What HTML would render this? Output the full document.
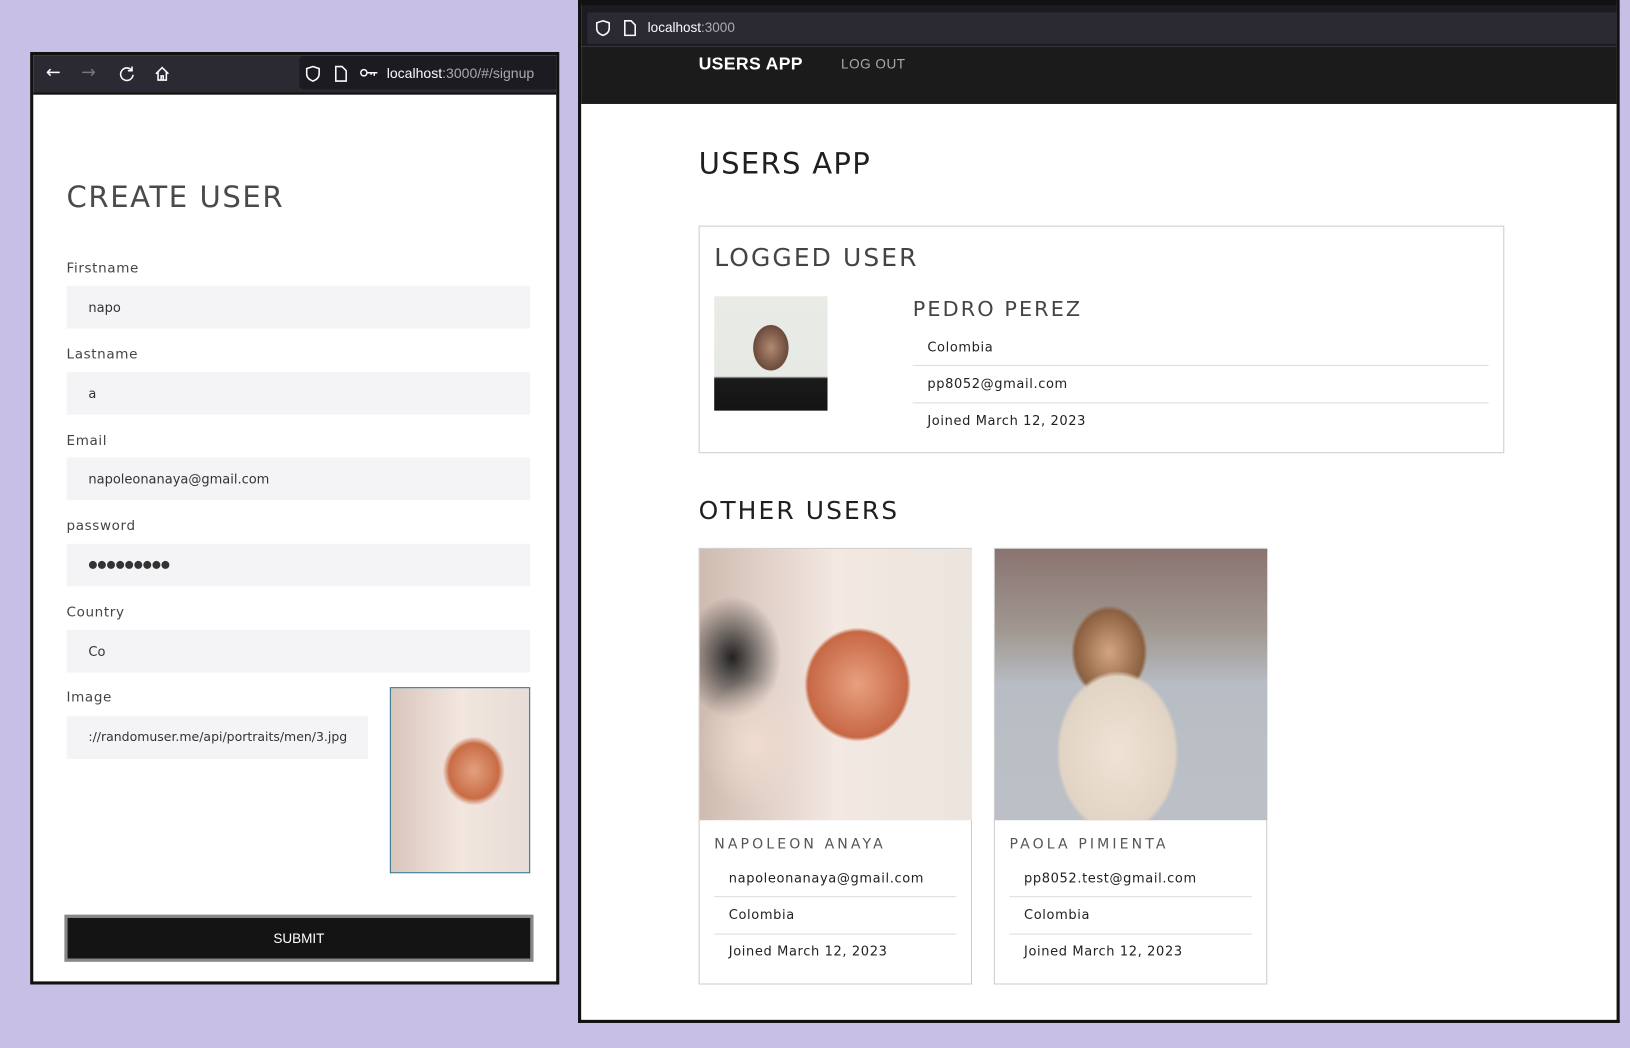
<!DOCTYPE html>
<html><head><meta charset="utf-8"><style>
html,body{margin:0;padding:0;width:1630px;height:1048px;overflow:hidden;background:#c8bfe6;}
#w{position:absolute;left:0;top:0;width:1568px;height:1008px;transform:scale(1.0396);transform-origin:0 0;font-family:"DejaVu Sans","Liberation Sans",sans-serif;}
.a{position:absolute;}
.lbl{position:absolute;left:32px;font-size:13px;color:#444;letter-spacing:.6px;}
.inp{position:absolute;left:32px;width:446px;height:41px;background:#f4f4f6;font-size:12.5px;color:#333;line-height:41px;text-indent:21px;}
.row{position:absolute;font-size:12.5px;color:#222;letter-spacing:.6px;}
.ln{position:absolute;height:1px;background:#ddd;}
</style></head><body><div id="w">
<!-- left window -->
<div class="a" style="left:29px;top:50px;width:503px;height:891px;border:3px solid #111;background:#fff;">
 <div class="a" style="left:0;top:0;width:503px;height:36px;background:#2b2a33;border-bottom:2px solid #111;">
  <div class="a" style="left:12px;top:7px;color:#fbfbfe;font-size:17px;">&#8592;</div>
  <div class="a" style="left:46px;top:7px;color:#777;font-size:17px;">&#8594;</div>
  <svg class="a" style="left:82px;top:10px" width="16" height="16" viewBox="0 0 16 16"><path d="M13 5 A6 6 0 1 0 14 9 M13 1 V5 H9" fill="none" stroke="#fbfbfe" stroke-width="1.5"/></svg>
  <svg class="a" style="left:116px;top:10px" width="16" height="16" viewBox="0 0 16 16"><path d="M2 8 L8 2 L14 8 M4 6 V14 H12 V6 M7 14 V10 H9 V14" fill="none" stroke="#fbfbfe" stroke-width="1.5"/></svg>
  <div class="a" style="left:256px;top:1px;width:247px;height:32px;background:#1c1b22;border-radius:4px 0 0 4px;"></div>
  <svg class="a" style="left:262px;top:10px" width="14" height="16" viewBox="0 0 14 16"><path d="M7 1 L13 3 V8 C13 12 10 14 7 15 C4 14 1 12 1 8 V3 Z" fill="none" stroke="#fbfbfe" stroke-width="1.5"/></svg>
  <svg class="a" style="left:290px;top:10px" width="12" height="16" viewBox="0 0 12 16"><path d="M1 1 H7 L11 5 V15 H1 Z" fill="none" stroke="#fbfbfe" stroke-width="1.5"/></svg>
  <svg class="a" style="left:314px;top:12px" width="18" height="10" viewBox="0 0 18 10"><circle cx="4" cy="5" r="3" fill="none" stroke="#fbfbfe" stroke-width="1.4"/><path d="M7 5 H17 M14 5 V8 M11 5 V7" fill="none" stroke="#fbfbfe" stroke-width="1.4"/></svg>
  <div class="a" style="left:340px;top:10px;color:#fbfbfe;font-size:13.5px;font-family:'Liberation Sans',sans-serif;">localhost<span style="color:#aaa">:3000/#/signup</span></div>
 </div>
 <div class="a" style="left:32px;top:120px;font-size:28px;color:#4a4a4a;letter-spacing:1.5px;">CREATE USER</div>
 <div class="lbl" style="top:198px">Firstname</div><div class="inp" style="top:222px">napo</div>
 <div class="lbl" style="top:281px">Lastname</div><div class="inp" style="top:305px">a</div>
 <div class="lbl" style="top:364px">Email</div><div class="inp" style="top:387px">napoleonanaya@gmail.com</div>
 <div class="lbl" style="top:446px">password</div><div class="inp" style="top:470px;font-size:10px;letter-spacing:0">●●●●●●●●●</div>
 <div class="lbl" style="top:529px">Country</div><div class="inp" style="top:553px">Co</div>
 <div class="lbl" style="top:611px">Image</div><div class="inp" style="top:636px;width:290px;text-indent:21px;white-space:nowrap;overflow:hidden;font-size:12px">://randomuser.me/api/portraits/men/3.jpg</div>
 <div class="a" style="left:343px;top:608px;width:133px;height:177px;border:1px solid #2a6f8a;background:radial-gradient(ellipse 30% 25% at 60% 45%,#e3a080,#c96c45 60%,transparent 75%),linear-gradient(90deg,#d9c6bc,#f2e6df 50%,#e8ddd6);"></div>
 <div class="a" style="left:30px;top:827px;width:445px;height:39px;background:#141414;border:3px solid #888;color:#fff;font-size:13px;text-align:center;line-height:39px;font-family:'Liberation Sans',sans-serif;">SUBMIT</div>
</div>
<!-- right window -->
<div class="a" style="left:556px;top:0;width:996px;height:981px;border:3px solid #111;border-top:none;background:#fff;">
 <div class="a" style="left:0;top:0;width:996px;height:45px;background:#1c1b22;border-top:5px solid #111;box-sizing:border-box;">
  <div class="a" style="left:6px;top:7px;width:990px;height:30px;background:#2b2a33;"></div>
  <svg class="a" style="left:14px;top:14px" width="14" height="16" viewBox="0 0 14 16"><path d="M7 1 L13 3 V8 C13 12 10 14 7 15 C4 14 1 12 1 8 V3 Z" fill="none" stroke="#fbfbfe" stroke-width="1.5"/></svg>
  <svg class="a" style="left:41px;top:14px" width="12" height="16" viewBox="0 0 12 16"><path d="M1 1 H7 L11 5 V15 H1 Z" fill="none" stroke="#fbfbfe" stroke-width="1.5"/></svg>
  <div class="a" style="left:64px;top:14px;color:#fbfbfe;font-size:13px;font-family:'Liberation Sans',sans-serif;">localhost<span style="color:#aaa">:3000</span></div>
 </div>
 <div class="a" style="left:0;top:45px;width:996px;height:55px;background:#1b1b1b;"></div>
 <div class="a" style="left:113px;top:52px;color:#fff;font-size:17px;font-weight:bold;font-family:'Liberation Sans',sans-serif;letter-spacing:.3px;">USERS APP</div>
 <div class="a" style="left:250px;top:54px;color:#aaa;font-size:13px;font-family:'Liberation Sans',sans-serif;letter-spacing:.5px;">LOG OUT</div>
 <div class="a" style="left:113px;top:141px;font-size:28px;color:#1f1f1f;letter-spacing:1.2px;">USERS APP</div>
 <div class="a" style="left:113px;top:217px;width:773px;height:217px;border:1px solid #ccc;"></div>
 <div class="a" style="left:128px;top:234px;font-size:24px;color:#444;letter-spacing:2px;">LOGGED USER</div>
 <div class="a" style="left:128px;top:285px;width:109px;height:110px;background:radial-gradient(ellipse 22% 28% at 50% 45%,#b08a74,#6b4a3a 70%,transparent 72%),linear-gradient(180deg,#e8ebe6 0%,#e6e9e4 70%,#1a1a1a 72%,#141414);"></div>
 <div class="a" style="left:319px;top:285px;font-size:20px;color:#444;letter-spacing:2px;">PEDRO PEREZ</div>
 <div class="row" style="left:333px;top:326px">Colombia</div>
 <div class="ln" style="left:319px;top:351px;width:554px"></div>
 <div class="row" style="left:333px;top:361px">pp8052@gmail.com</div>
 <div class="ln" style="left:319px;top:387px;width:554px"></div>
 <div class="row" style="left:333px;top:397px">Joined March 12, 2023</div>
 <div class="a" style="left:113px;top:477px;font-size:24px;color:#1f1f1f;letter-spacing:2px;">OTHER USERS</div>
 <!-- card 1 -->
 <div class="a" style="left:113px;top:527px;width:263px;height:420px;border:1px solid #ccc;box-sizing:border-box;"></div>
 <div class="a" style="left:114px;top:528px;width:262px;height:261px;background:radial-gradient(ellipse 28% 30% at 58% 50%,#e8a080,#c76845 65%,transparent 70%),radial-gradient(ellipse 25% 30% at 20% 72%,#f0dccf,transparent 80%),radial-gradient(ellipse 20% 25% at 12% 40%,#222,transparent 90%),linear-gradient(90deg,#cfbbb0,#f3e8e2 50%,#ece4de);"></div>
 <div class="a" style="left:128px;top:804px;font-size:13.5px;color:#555;letter-spacing:3px;">NAPOLEON ANAYA</div>
 <div class="row" style="left:142px;top:837px">napoleonanaya@gmail.com</div>
 <div class="ln" style="left:128px;top:862px;width:233px"></div>
 <div class="row" style="left:142px;top:872px">Colombia</div>
 <div class="ln" style="left:128px;top:898px;width:233px"></div>
 <div class="row" style="left:142px;top:907px">Joined March 12, 2023</div>
 <!-- card 2 -->
 <div class="a" style="left:397px;top:527px;width:263px;height:420px;border:1px solid #ccc;box-sizing:border-box;"></div>
 <div class="a" style="left:398px;top:528px;width:262px;height:261px;background:radial-gradient(ellipse 30% 40% at 45% 75%,#eee3d6,#e2d4c4 70%,transparent 75%),radial-gradient(ellipse 18% 22% at 42% 38%,#d4a582,#8b6040 70%,transparent 78%),linear-gradient(180deg,#8a7370 0%,#a09890 30%,#b8bcc4 50%,#bcc0c6 100%);"></div>
 <div class="a" style="left:412px;top:804px;font-size:13.5px;color:#555;letter-spacing:3px;">PAOLA PIMIENTA</div>
 <div class="row" style="left:426px;top:837px">pp8052.test@gmail.com</div>
 <div class="ln" style="left:412px;top:862px;width:233px"></div>
 <div class="row" style="left:426px;top:872px">Colombia</div>
 <div class="ln" style="left:412px;top:898px;width:233px"></div>
 <div class="row" style="left:426px;top:907px">Joined March 12, 2023</div>
</div>
</div></body></html>
